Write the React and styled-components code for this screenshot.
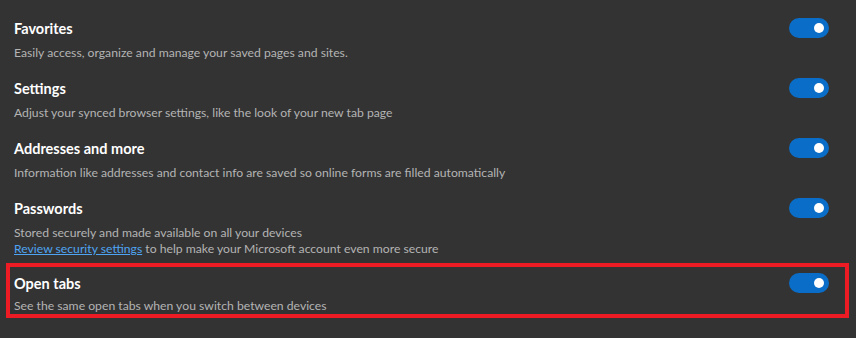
import React from 'react'
import styled, { createGlobalStyle } from 'styled-components'

const GlobalStyle = createGlobalStyle`
  html, body {
    margin: 0;
    padding: 0;
    background: #333333;
  }
  body {
    font-family: Lato, "Noto Sans", sans-serif;
  }
`

const Page = styled.div`
  width: 856px;
  height: 338px;
  box-sizing: border-box;
  padding: 19px 27px 0 14px;
  background: #333333;
  overflow: hidden;
`

const List = styled.div`
  display: flex;
  flex-direction: column;
  gap: 18px;
`

const Row = styled.div`
  display: flex;
  justify-content: space-between;
  align-items: flex-start;
  ${p => p.$highlighted && `
    margin: -12px -20px 0 -8px;
    padding: 7px 16px 0 4px;
    border: 4px solid #ed1c24;
  `}
`

const Text = styled.div`
  display: flex;
  flex-direction: column;
`

const Title = styled.div`
  color: #ffffff;
  font-size: 14.5px;
  font-weight: 700;
  line-height: 20px;
  margin-bottom: ${p => (p.$tight ? '4px' : '6px')};
`

const Desc = styled.div`
  color: #b4b4b4;
  font-size: 12.2px;
  line-height: 16px;
`

const Link = styled.a`
  color: #4ea4f2;
  text-decoration: underline;
  cursor: pointer;
`

const Toggle = styled.div`
  flex: none;
  width: 40px;
  height: 20px;
  margin-top: -1px;
  border-radius: 10px;
  background: #0a6ec9;
  display: flex;
  align-items: center;
  justify-content: flex-end;
  padding-right: 5px;
  box-sizing: border-box;
`

const Knob = styled.span`
  width: 10px;
  height: 10px;
  border-radius: 50%;
  background: #ffffff;
`

const items = [
  { title: 'Favorites', desc: ['Easily access, organize and manage your saved pages and sites.'] },
  { title: 'Settings', desc: ['Adjust your synced browser settings, like the look of your new tab page'] },
  { title: 'Addresses and more', desc: ['Information like addresses and contact info are saved so online forms are filled automatically'] },
  { title: 'Passwords', desc: ['Stored securely and made available on all your devices'], link: true },
  { title: 'Open tabs', desc: ['See the same open tabs when you switch between devices'], highlighted: true },
]

export default function App() {
  return (
    <Page>
      <GlobalStyle />
      <List>
        {items.map(item => (
          <Row key={item.title} $highlighted={item.highlighted}>
            <Text>
              <Title $tight={item.highlighted}>{item.title}</Title>
              {item.desc.map(d => <Desc key={d}>{d}</Desc>)}
              {item.link && (
                <Desc><Link>Review security settings</Link> to help make your Microsoft account even more secure</Desc>
              )}
            </Text>
            <Toggle><Knob /></Toggle>
          </Row>
        ))}
      </List>
    </Page>
  )
}
